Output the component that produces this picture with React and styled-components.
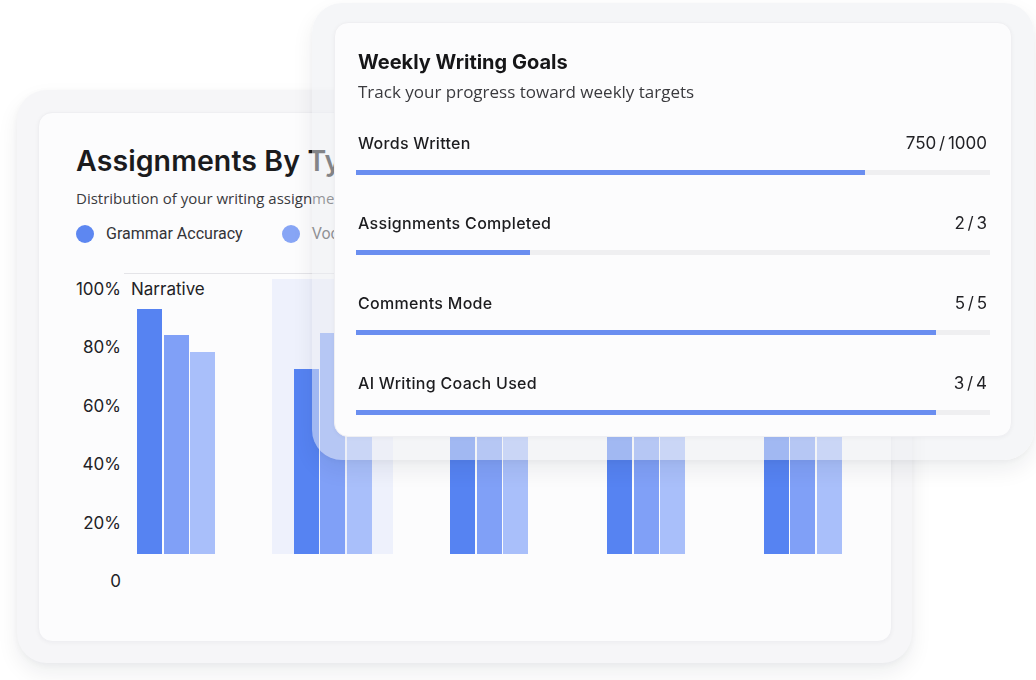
import React from 'react'
import styled, { createGlobalStyle } from 'styled-components'

const GlobalStyle = createGlobalStyle`
  html, body {
    margin: 0;
    padding: 0;
    background: #ffffff;
  }
  body {
    font-family: Inter, "Noto Sans", sans-serif;
    color: #1d1d1f;
  }
`;

const Canvas = styled.div`
  position: relative;
  width: 1036px;
  height: 680px;
  overflow: hidden;
  box-sizing: border-box;
  padding: 90px 0 0 17px;
  background: #ffffff;
`;

// outer frosted frame round each card
const Shell = styled.div`
  box-sizing: border-box;
  border-radius: 30px;
  background: ${({ $glass }) => ($glass ? 'rgba(236, 237, 241, 0.5)' : '#f6f6f8')};
  backdrop-filter: ${({ $glass }) => ($glass ? 'blur(0.6px)' : 'none')};
  box-shadow: 0 10px 22px rgba(20, 24, 40, 0.07), 0 2px 6px rgba(20, 24, 40, 0.04);
`;

const BackShell = styled(Shell)`
  width: 895px;
  height: 573px;
  padding: 22px 20px 21px 21px;
`;

const FrontShell = styled(Shell)`
  position: absolute;
  left: 312px;
  top: 3px;
  width: 722px;
  height: 457px;
  padding: 19px 22px 23px 22px;
`;

const Panel = styled.div`
  box-sizing: border-box;
  height: 100%;
  border-radius: 14px;
  background: #fcfcfd;
  border: 1px solid #efeff2;
  box-shadow: 0 1px 4px rgba(20, 24, 40, 0.04);
  overflow: hidden;
`;

const ChartPanel = styled(Panel)`
  padding: 30px 37px 0;
`;

const GoalsPanel = styled(Panel)`
  padding: 27px 21px 0;
`;

// the part of the header that shows left of the goals card
const ChartHead = styled.div`
  width: 259px;
  overflow: hidden;
`;

const ChartTitle = styled.h2`
  margin: 0;
  font-size: 28.5px;
  line-height: 36px;
  font-weight: 600;
  letter-spacing: 0.1px;
  white-space: nowrap;
  color: #1b1b1d;
`;

const SubText = styled.p`
  margin: ${({ $mt }) => $mt || 0}px 0 0;
  padding-left: ${({ $inset }) => $inset || 0}px;
  font-family: "Open Sans", Roboto, sans-serif;
  font-size: ${({ $size }) => $size || 15}px;
  line-height: 20px;
  color: #3a3a3e;
  white-space: nowrap;
`;

const Legend = styled.div`
  display: flex;
  gap: 39px;
  margin-top: 16px;
`;

const LegendItem = styled.div`
  display: flex;
  align-items: center;
  gap: 12px;
  font-family: Roboto, "Liberation Sans", sans-serif;
  font-size: 16px;
  line-height: 20px;
  color: #333337;
  white-space: nowrap;
`;

const Dot = styled.span`
  flex: none;
  width: 18px;
  height: 18px;
  border-radius: 50%;
  background: ${({ $color }) => $color};
`;

const Chart = styled.div`
  display: flex;
  align-items: flex-start;
  margin-top: 29px;
`;

const YAxis = styled.div`
  width: 45px;
  height: 312px;
  margin-top: 6px;
  display: flex;
  flex-direction: column;
  justify-content: space-between;
  align-items: flex-end;
  font-size: 17px;
  line-height: 20px;
  color: #222226;
`;

const Plot = styled.div`
  flex: 1;
  margin-left: 3px;
  border-top: 1px solid #e4e4e8;
  padding: 5px 0 0 13px;
`;

const Groups = styled.div`
  display: flex;
  gap: 78.7px;
  height: 275px;
`;

const Group = styled.div`
  position: relative;
  width: 78px;
  display: flex;
  flex-direction: column;

  &::before {
    content: '';
    display: ${({ $active }) => ($active ? 'block' : 'none')};
    position: absolute;
    left: -22px;
    right: -21px;
    top: 0;
    bottom: 0;
    background: #eef1fc;
  }
`;

const GroupLabel = styled.div`
  position: relative;
  margin-left: -6px;
  font-size: 17px;
  line-height: 20px;
  color: #222226;
  white-space: nowrap;
`;

const Bars = styled.div`
  position: relative;
  flex: 1;
  display: flex;
  align-items: flex-end;
  gap: 1.5px;
`;

const Bar = styled.div`
  width: 25px;
  background: ${({ $color }) => $color};
`;

const GoalsTitle = styled.h3`
  margin: 0;
  padding-left: 2px;
  font-size: 20px;
  line-height: 24px;
  font-weight: 700;
  color: #161618;
`;

const GoalList = styled.div`
  display: flex;
  flex-direction: column;
  gap: 38px;
  margin-top: 31px;
`;

const Goal = styled.div`
  display: flex;
  flex-direction: column;
  gap: 17px;
`;

const GoalHead = styled.div`
  display: flex;
  justify-content: space-between;
  align-items: center;
  padding: 0 3px 0 2px;
  line-height: 20px;
`;

const GoalName = styled.span`
  font-size: 16px;
  font-weight: 500;
  letter-spacing: 0.3px;
  color: #1c1c1f;
`;

const GoalValue = styled.span`
  font-size: 17px;
  font-weight: 400;
  color: #222226;
  word-spacing: -2px;
`;

const Track = styled.div`
  height: 5px;
  background: #efeff1;
`;

const Fill = styled.div`
  height: 100%;
  background: #6a8ef0;
`;

const colors = ['#5683f2', '#80a0f7', '#a9bffa'];

const groups = [
  { label: 'Narrative', values: [245, 219, 202] },
  { values: [185, 221, 176], active: true },
  { values: [206, 190, 170] },
  { values: [232, 214, 196] },
  { values: [224, 200, 184] },
];

const goals = [
  { name: 'Words Written', value: '750 / 1000', pct: 80.3 },
  { name: 'Assignments Completed', value: '2 / 3', pct: 27.4 },
  { name: 'Comments Mode', value: '5 / 5', pct: 91.5 },
  { name: 'AI Writing Coach Used', value: '3 / 4', pct: 91.5 },
];

export default function App() {
  return (
    <>
      <GlobalStyle />
      <Canvas>
        <BackShell>
          <ChartPanel>
            <ChartHead>
              <ChartTitle>Assignments By Type</ChartTitle>
              <SubText $mt={9}>Distribution of your writing assignments by type</SubText>
              <Legend>
                <LegendItem><Dot $color="#5d87f1" />Grammar Accuracy</LegendItem>
                <LegendItem><Dot $color="#87a5f5" />Vocabulary</LegendItem>
              </Legend>
            </ChartHead>
            <Chart>
              <YAxis>
                <span>100%</span>
                <span>80%</span>
                <span>60%</span>
                <span>40%</span>
                <span>20%</span>
                <span>0</span>
              </YAxis>
              <Plot>
                <Groups>
                  {groups.map((g, i) => (
                    <Group key={i} $active={g.active}>
                      {g.label && <GroupLabel>{g.label}</GroupLabel>}
                      <Bars>
                        {g.values.map((h, j) => (
                          <Bar key={j} $color={colors[j]} style={{ height: h }} />
                        ))}
                      </Bars>
                    </Group>
                  ))}
                </Groups>
              </Plot>
            </Chart>
          </ChartPanel>
        </BackShell>

        <FrontShell $glass>
          <GoalsPanel>
            <GoalsTitle>Weekly Writing Goals</GoalsTitle>
            <SubText $mt={8} $size={17} $inset={2}>Track your progress toward weekly targets</SubText>
            <GoalList>
              {goals.map((g) => (
                <Goal key={g.name}>
                  <GoalHead>
                    <GoalName>{g.name}</GoalName>
                    <GoalValue>{g.value}</GoalValue>
                  </GoalHead>
                  <Track>
                    <Fill style={{ width: `${g.pct}%` }} />
                  </Track>
                </Goal>
              ))}
            </GoalList>
          </GoalsPanel>
        </FrontShell>
      </Canvas>
    </>
  );
}
